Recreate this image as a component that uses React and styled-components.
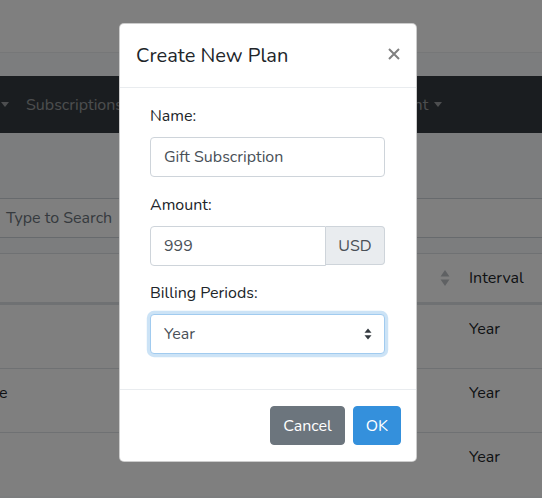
import React from "react";
import styled, { createGlobalStyle } from "styled-components";

const Global = createGlobalStyle`
  html, body { margin: 0; padding: 0; }
  body {
    font-family: Nunito, Lato, "Noto Sans", sans-serif;
    font-size: 16px;
    color: #212529;
    background: #f8fafc;
    overflow: hidden;
  }
  * { box-sizing: border-box; }
`;

const Page = styled.div`
  width: 542px;
  height: 498px;
  position: relative;
  overflow: hidden;
  background: #f8fafc;
`;

const TopBar = styled.div`
  height: 53px;
  background: #ffffff;
  border-bottom: 1px solid #eceef0;
`;

const DarkNav = styled.nav`
  margin-top: 23px;
  height: 57px;
  background: #343a40;
  display: flex;
  align-items: center;
  color: rgba(255, 255, 255, 0.5);
  font-size: 16px;
`;

const NavItem = styled.span`
  display: flex;
  align-items: center;
  gap: 6px;
  margin-left: ${(p) => p.$ml || 0}px;
  white-space: nowrap;
`;

const Caret = styled.span`
  width: 0;
  height: 0;
  border-left: 4.5px solid transparent;
  border-right: 4.5px solid transparent;
  border-top: 5px solid rgba(255, 255, 255, 0.5);
  display: inline-block;
`;

const Content = styled.div`
  padding-top: 65px;
`;

const SearchBox = styled.div`
  height: 40px;
  border-top: 1px solid #ced4da;
  border-bottom: 1px solid #ced4da;
  background: #fff;
  display: flex;
  align-items: center;
  padding-left: 6px;
  color: #6c757d;
  font-size: 16px;
`;

const Table = styled.div`
  margin-top: 15px;
  background: #fff;
`;

const Row = styled.div`
  display: grid;
  grid-template-columns: 1fr 90px 73px;
  height: ${(p) => p.$h}px;
  border-top: 1px solid #dee2e6;
  border-bottom: ${(p) => (p.$head ? "2px solid #dee2e6" : "none")};
  align-items: center;
`;

const Cell = styled.div`
  display: flex;
  align-items: center;
  justify-content: ${(p) => (p.$end ? "flex-end" : "flex-start")};
  padding-right: ${(p) => (p.$end ? 19 : 0)}px;
  margin-left: ${(p) => p.$ml || 0}px;
  margin-top: ${(p) => p.$mt || 0}px;
  white-space: nowrap;
  overflow: visible;
  align-self: ${(p) => (p.$top ? "start" : "center")};
`;

const Overlay = styled.div`
  position: absolute;
  inset: 0;
  background: rgba(0, 0, 0, 0.5);
`;

const Modal = styled.div`
  position: absolute;
  top: 23px;
  left: 119px;
  width: 298px;
  background: #fff;
  border: 1px solid rgba(0, 0, 0, 0.2);
  border-radius: 5px;
  display: flex;
  flex-direction: column;
`;

const Header = styled.div`
  display: flex;
  align-items: center;
  justify-content: space-between;
  padding: 16px 14px 16px 16px;
  border-bottom: 1px solid #e9ecef;
  height: 64px;
`;

const Title = styled.h5`
  margin: 0;
  font-size: 20px;
  font-weight: 400;
  line-height: 30px;
  color: #212529;
`;

const Close = styled.button`
  border: 0;
  background: none;
  padding: 0;
  width: 16px;
  height: 16px;
  display: flex;
  align-items: center;
  justify-content: center;
  margin-top: -4px;
  cursor: pointer;
`;

const Body = styled.div`
  padding: 16px 31px 20px 30px;
`;

const Group = styled.div`
  margin-bottom: ${(p) => (p.$last ? 0 : 16)}px;
`;

const Label = styled.label`
  display: block;
  line-height: 24px;
  margin-bottom: 9px;
  font-size: 16px;
  color: #212529;
`;

const Input = styled.div`
  height: 40px;
  border: 1px solid #ced4da;
  border-radius: ${(p) => (p.$joined ? "4px 0 0 4px" : "4px")};
  display: flex;
  align-items: center;
  padding: 0 13px;
  color: #495057;
  font-size: 16px;
  flex: 1;
  background: #fff;
`;

const InputGroup = styled.div`
  display: flex;
  height: 39px;
`;

const Addon = styled.div`
  width: 59px;
  border: 1px solid #ced4da;
  border-left: 0;
  border-radius: 0 4px 4px 0;
  background: #e9ecef;
  display: flex;
  align-items: center;
  justify-content: center;
  color: #495057;
  font-size: 16px;
`;

const Select = styled.div`
  height: 40px;
  border: 1px solid #a1cbef;
  border-radius: 4px;
  box-shadow: 0 0 0 3.2px rgba(52, 144, 220, 0.25);
  display: flex;
  align-items: center;
  justify-content: space-between;
  padding: 0 12px 0 13px;
  color: #495057;
  font-size: 16px;
  background: #fff;
`;

const Footer = styled.div`
  border-top: 1px solid #e9ecef;
  padding: 12px 11px 12px 12px;
  display: flex;
  justify-content: flex-end;
  margin-top: 15px;
`;

const Button = styled.button`
  margin: 4px;
  height: 39px;
  border-radius: 4px;
  border: 1px solid ${(p) => p.$bg};
  background: ${(p) => p.$bg};
  color: #fff;
  font-family: inherit;
  font-size: 16px;
  padding: 0 ${(p) => p.$px}px;
`;

const SortIcon = () => (
  <svg width="10" height="18" viewBox="0 0 10 18">
    <path d="M5 1 L9.5 7.5 H0.5 Z" fill="#bfc3c7" />
    <path d="M5 17 L9.5 10.5 H0.5 Z" fill="#bfc3c7" />
  </svg>
);

const SelectArrows = () => (
  <svg width="8" height="12" viewBox="0 0 8 12">
    <path d="M4 0.5 L7.5 4.8 H0.5 Z" fill="#343a40" />
    <path d="M4 11.5 L7.5 7.2 H0.5 Z" fill="#343a40" />
  </svg>
);

const CloseIcon = () => (
  <svg width="12" height="12" viewBox="0 0 12 12">
    <path d="M1 1 L11 11 M11 1 L1 11" stroke="#808080" strokeWidth="2" strokeLinecap="butt" />
  </svg>
);

export default function App() {
  return (
    <Page>
      <Global />
      <TopBar />
      <DarkNav>
        <NavItem $ml={1}>
          <Caret />
        </NavItem>
        <NavItem $ml={17}>Subscriptions</NavItem>
        <NavItem $ml={242}>
          Payment <Caret />
        </NavItem>
      </DarkNav>
      <Content>
        <SearchBox>Type to Search</SearchBox>
        <Table>
          <Row $head $h={51}>
            <Cell />
            <Cell $end>
              <SortIcon />
            </Cell>
            <Cell>Interval</Cell>
          </Row>
          <Row $h={64}>
            <Cell />
            <Cell />
            <Cell $top $mt={13}>Year</Cell>
          </Row>
          <Row $h={64}>
            <Cell $top $mt={13} $ml={-1}>e</Cell>
            <Cell />
            <Cell $top $mt={13}>Year</Cell>
          </Row>
          <Row $h={64}>
            <Cell />
            <Cell />
            <Cell $top $mt={13}>Year</Cell>
          </Row>
        </Table>
      </Content>
      <Overlay />
      <Modal>
        <Header>
          <Title>Create New Plan</Title>
          <Close aria-label="Close">
            <CloseIcon />
          </Close>
        </Header>
        <Body>
          <Group>
            <Label>Name:</Label>
            <Input>Gift Subscription</Input>
          </Group>
          <Group>
            <Label>Amount:</Label>
            <InputGroup>
              <Input $joined>999</Input>
              <Addon>USD</Addon>
            </InputGroup>
          </Group>
          <Group $last>
            <Label>Billing Periods:</Label>
            <Select>
              <span>Year</span>
              <SelectArrows />
            </Select>
          </Group>
        </Body>
        <Footer>
          <Button $bg="#6c757d" $px={12}>Cancel</Button>
          <Button $bg="#3490dc" $px={12}>OK</Button>
        </Footer>
      </Modal>
    </Page>
  );
}
